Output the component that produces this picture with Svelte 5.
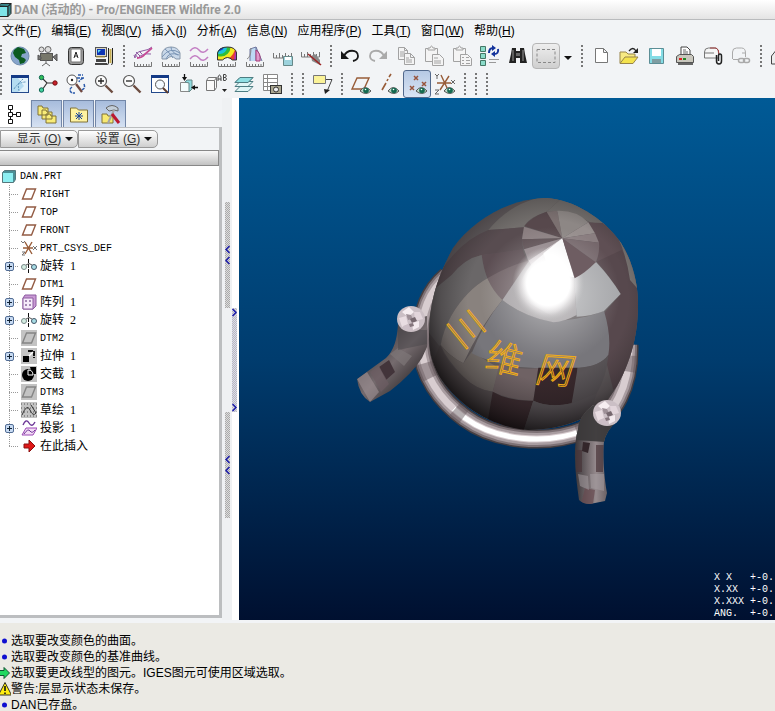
<script lang="ts">
  interface Tool {
    icon: string
    label: string
    state?: 'boxed' | 'active'
  }

  interface TreeItem {
    name: string
    icon: string
    count?: number
    expandable?: boolean
    suppressed?: boolean
  }

  const menus = [
    ['文件', 'F'], ['编辑', 'E'], ['视图', 'V'], ['插入', 'I'], ['分析', 'A'],
    ['信息', 'N'], ['应用程序', 'P'], ['工具', 'T'], ['窗口', 'W'], ['帮助', 'H'],
  ]

  const ruler = '<path d="M3.500 18v4.500h17V18M6.500 20v2M9.500 20v2M12.500 20v2M15.500 20v2M18 20v2" fill="none" stroke="#777" stroke-width="1"/>'
  const eye = '<path d="M11 19q5-7 11 0q-5 5-11 0z" fill="#bcd8c8" stroke="#555"/><circle cx="17" cy="18.500" r="2.800" fill="#146a50"/><circle cx="16.500" cy="17.500" r=".8" fill="#fff"/>'
  const lens = '<circle cx="9" cy="9" r="5.500" fill="#fbfbfb" stroke="#555" stroke-width="1.200"/><path d="M13.500 13.500l7 7" stroke="#6c4c40" stroke-width="2.400"/>'
  const clip = '<path d="M3.500 4.500h12v13h-12z" fill="#f4f4f4" stroke="#a2a2a2"/><path d="M6 6V4h2q1.500-4 3 0h2v2z" fill="#f4f4f4" stroke="#a2a2a2"/><path d="M10.500 10.500h7l4 4v7h-11z" fill="#f4f4f4" stroke="#a2a2a2"/>'

  const icons: Record<string, string> = {
    globe: '<circle cx="12" cy="12" r="9" fill="#86a4cb" stroke="#6f8cae"/><path d="M6 6l4-3 6 2 2 4-4 1-1 3 3 1 2 2-2 3-4 1-1-4-4-3-2-4z" fill="#0b5a20"/>',
    camera: '<circle cx="5.500" cy="5.500" r="2.500" fill="#ddd" stroke="#666"/><circle cx="12" cy="5.500" r="3" fill="#ddd" stroke="#666"/><rect x="4.500" y="9.500" width="12" height="7" fill="#77776a" stroke="#555"/><path d="M17 13l4-3v7zM2 11l3 2v2l-3 1z" fill="#777" stroke="#555"/><path d="M10 16v3l-4 3M10 19l4 3" fill="none" stroke="#666"/>',
    key: '<rect x="4.500" y="3.500" width="15" height="17" rx="3" fill="#999" stroke="#333"/><rect x="7" y="5" width="10" height="13" rx="1" fill="#fff" stroke="#777"/><path d="M10 14l2-6 2 6M10.700 12h2.600" stroke="#222" fill="none"/>',
    computer: '<rect x="3.500" y="3.500" width="11" height="9" fill="#d8d4c4" stroke="#555"/><rect x="5" y="5" width="8" height="6" fill="#0d35b5"/><path d="M6 6h3l-3 3z" fill="#5adcf4"/><path d="M4 15h10v3H4zM3 19h12v2H3z" fill="#444"/><path d="M4 13h9" stroke="#bba040"/><path d="M16.500 4v15l-1 2M20.500 4v15l-1 2" stroke="#222" fill="none"/><path d="M18.500 5v14" stroke="#c5ac50" stroke-width="2"/>',
    curvature: '<path d="M4 14q0-6 7-7t10-4M7 14q4-5 13-4M4 14l-1-3M7 14l-3-4M9 12L5 8M11 10L8 7" stroke="#8e5aa2" fill="none"/><path d="M6 14q5 0 8-4l7-6" stroke="#c64a96" stroke-width="1.800" fill="none"/>' + ruler,
    shell: '<path d="M3 15V9q2-6 9-6t9 6v6h-4q-5-5-9 0z" fill="#c9d8e9" stroke="#8797aa"/><path d="M3 13q8-11 18-4M7 15q3-8 13-4M6 5q6 5 8 9M12 3q0 5 7 8" fill="none" stroke="#7994b5"/>' + ruler,
    waves: '<path d="M3 7q5-6 9-1t9-1M3 15q5-6 9-1t9-1" fill="none" stroke="#c480c4" stroke-width="1.500"/>' + ruler,
    rainbow: '<clipPath id="rb"><path d="M2 16V9q2-6 10-6t10 6v7h-5q-5-5-10 0z"/></clipPath><g clip-path="url(#rb)"><path d="M0 0h24v18H0z" fill="#e8402c"/><circle cx="7" cy="3" r="13" fill="#f4e820"/><circle cx="6" cy="3" r="9.500" fill="#30bd38"/><circle cx="5" cy="3" r="7" fill="#1cc4dc"/><circle cx="4" cy="2" r="5" fill="#1839d0"/><path d="M20 8h4v8h-5z" fill="#b030b8"/></g><path d="M2.500 16V9q2-6 10-6t9 6v7h-4q-5-5-10 0z" fill="none" stroke="#333"/>' + ruler,
    section: '<path d="M7 17V5l6-2 6 14M13 3v14" fill="#bdd9f4" stroke="#6f779e"/><path d="M4 15q4-2 4-11" fill="none" stroke="#888"/><path d="M13 6q5 3 4 11h-4z" fill="#df9bcc" stroke="#aa3a7a"/>' + ruler,
    rulerSave: '<path d="M2.500 9v5h18V9M5.500 11v3M8.500 9v5M11.500 11v3M14.500 9v5M17.500 11v3" fill="none" stroke="#777"/><path d="M12.500 12.500h9v9h-9z" fill="#9cd2dc" stroke="#688"/><path d="M14 13h6v3h-6z" fill="#fff"/>',
    rulerCut: '<path d="M2.500 8v5h18V8M5.500 10v3M8.500 8v5M11.500 10v3M14.500 8v5M17.500 10v3" fill="none" stroke="#777"/><path d="M12 12l4-2 5 6v5l-8-4z" fill="#888"/><path d="M9 10l13 11" stroke="#9c2424" stroke-width="1.500"/>',
    undo: '<path d="M6 12c3-7 14-7 14 0q0 4-5 5" fill="none" stroke="#181818" stroke-width="1.800"/><path d="M3 7v8h8z" fill="#181818"/>',
    redo: '<path d="M18 12c-3-7-14-7-14 0q0 4 5 5" fill="none" stroke="#aaa" stroke-width="1.800"/><path d="M21 7v8h-8z" fill="#aaa"/>',
    copy: '<path d="M4.500 3.500h6l3 3v9h-9zM10.500 3.500v3h3M6 8h5M6 10h5M6 12h5" fill="#f4f4f4" stroke="#a2a2a2"/><path d="M10.500 9.500h6l4 4v7h-10zM16.500 9.500v4h4M12 14h3M12 16h6M12 18h6" fill="#f4f4f4" stroke="#a2a2a2"/>',
    paste: clip + '<path d="M12 14h4M12 17h7M12 19h7" stroke="#a2a2a2"/>',
    pasteSpecial: clip + '<path d="M12 13.500h2M16 13.500h3M12 16.500h2M16 16.500h4M12 19.500h2M16 19.500h4" stroke="#a2a2a2"/>',
    regen: '<path d="M2.500 2.500h5v5h-5zM2.500 9.500h5v5h-5zM2.500 16.500h5v5h-5z" fill="#8adbc9" stroke="#476"/><path d="M11 9q0-5 4-5M20 5q1 5-4 5" fill="none" stroke="#14349c" stroke-width="2"/><path d="M14 1v6l4-3zM17 7v6l-4-3z" fill="#14349c"/><path d="M11 15.500h10M11 18.500h7" stroke="#999"/>',
    find: '<path d="M6 4h4v3h4V4h4l1 6 2 9h-7v-5h-4v5H3l2-9z" fill="#222"/><path d="M7 6v11M17 6v11" stroke="#999"/><path d="M10 9h4v3h-4z" fill="#666"/>',
    select: '<path d="M3 5.500h18v13H3z" fill="none" stroke="#888" stroke-dasharray="3 2"/>',
    fresh: '<path d="M6.500 4.500h8l4 4v10h-12zM14.500 4.500v4h4" fill="#fff" stroke="#777"/>',
    open: '<path d="M3 19V8h6l2 2h7v3" fill="#f7ea83" stroke="#98854a"/><path d="M3 19.500l5-6.500h13l-5 6.500z" fill="#f4e34e" stroke="#98854a"/><path d="M12 7q4-5 7 0" fill="none" stroke="#222" stroke-width="1.300"/><path d="M21 4v5h-5z" fill="#222"/>',
    save: '<path d="M4.500 4.500h14v15h-14z" fill="#84dce5" stroke="#5c8e96"/><path d="M7 5h9v7H7z" fill="#fff"/><path d="M7 15h9v4H7z" fill="#7f9da2"/>',
    print: '<path d="M8 12V3h6l3 3v6z" fill="#fff" stroke="#444"/><path d="M10 6h3M10 8h5M10 10h5" stroke="#666"/><path d="M3.500 12.500l3-2h12l2 2v6h-17z" fill="#c9c7bd" stroke="#555"/><path d="M5 20h15" stroke="#666" stroke-width="2"/><path d="M6 15h3" stroke="#d22" stroke-width="2"/><path d="M10 15h3" stroke="#282" stroke-width="2"/>',
    mail: '<path d="M3.500 14V8q0-4 4-4h6q4 0 4 5v5zM3 9h10" fill="#f6f6f6" stroke="#777"/><path d="M9 4h6q3 1 3 6" stroke="#a23c3c" fill="none"/><path d="M15.500 11v6q0 3 2.500 3t2.500-3v-5q0-2-1.500-2t-1.500 2v5" fill="none" stroke="#222" stroke-width="1.500"/>',
    mailLink: '<path d="M3.500 15V8q0-4 4-4h5q4 0 4 5v4M4 15.500h5M13 9h3" fill="none" stroke="#aaa"/><rect x="9.500" y="14.500" width="6" height="4" rx="2" fill="none" stroke="#aaa" stroke-width="1.500"/><rect x="14.500" y="14.500" width="6" height="4" rx="2" fill="none" stroke="#aaa" stroke-width="1.500"/>',
    partial: '<path d="M3.500 20V12l4-5h9v13zM7 12h8" fill="#eee" stroke="#444"/>',
    sketch: '<rect x="3.500" y="3.500" width="17" height="17" fill="#e2f3fb" stroke="#244a8c"/><path d="M3 3h18v3H3z" fill="#143a86"/><path d="M4 6h6l6 8-6 6H4z" fill="#b4dcf1"/><path d="M6 17q4-7 12-7M15 7l-5 5 1 7" fill="none" stroke="#5c94bc" stroke-dasharray="2 1"/>',
    triad: '<path d="M6 6l5 5h8M11 11l-5 7" stroke="#333" stroke-width="1.200" fill="none"/><circle cx="5.500" cy="5.500" r="2.200" fill="#30be55" stroke="#165"/><circle cx="5.500" cy="18" r="2.200" fill="#40cf9b" stroke="#165"/><circle cx="19" cy="11" r="2.200" fill="#c8202c" stroke="#711"/>',
    reorient: '<circle cx="8" cy="8" r="5" fill="#fff" stroke="#555"/><circle cx="8" cy="8" r="1.200" fill="#222"/><path d="M12 12l6 8" stroke="#704840" stroke-width="2.400"/><path d="M14 3h5M13 6h7q-4 1-5 4M20 12q2 5-3 6M8 15q-4 3 0 6h3" fill="none" stroke="#2858aa" stroke-width="1.500" stroke-dasharray="3 1"/>',
    zoomIn: lens + '<path d="M6 9h6M9 6v6" stroke="#222" stroke-width="1.300"/>',
    zoomOut: lens + '<path d="M6 9h6" stroke="#222" stroke-width="1.300"/>',
    refit: '<rect x="3.500" y="3.500" width="17" height="17" fill="#fff" stroke="#234a8c"/><path d="M3 3h18v3H3z" fill="#143a86"/><circle cx="12" cy="12.500" r="4.500" fill="#f4faff" stroke="#555"/><path d="M15 16l5 5" stroke="#5c3c30" stroke-width="2"/>',
    views: '<path d="M4.500 10.500h9v9h-9z" fill="#f4fcfc" stroke="#888"/><path d="M9 10l2-2h5v9l-3 3V11z" fill="#8fdbe0" stroke="#688"/><path d="M8.500 2v5M22 15.500h-5" stroke="#111" stroke-width="1.300"/><path d="M6 5h5l-2.500 4zM19 13v5l-4-2.500z" fill="#111"/>',
    named: '<path d="M2.500 8.500l2-3h8v10l-2 3h-8zM2.500 8.500h8v10M10.500 8.500l2-3" fill="#fafafa" stroke="#777"/><path d="M14 9V5q1.500-4 3 0v4M14 7h3M19.500 2.500v6h2q2-1.500 0-3h-2M19.500 2.500h2q1.500 1.500 0 3" fill="none" stroke="#444"/><path d="M18 17h5l-2.500 3z" fill="#222"/>',
    layers: '<path d="M3 19.500l5-5h13l-5 5zM3 14.500l5-5h13l-5 5zM3 10.500l5-5h13l-5 5z" fill="#dff6f6" stroke="#4d7d82"/><path d="M3 10.500l5-5h13l-5 5z" fill="#8fe0e4" stroke="#4d7d82"/>',
    table: '<path d="M3.500 2.500h14v16h-14zM3 6.500h15M3 10.500h15M3 14.500h15M7.500 3v15" fill="#fff" stroke="#888"/><rect x="10.500" y="13.500" width="11" height="8" fill="#aaa690" stroke="#333"/><circle cx="16" cy="17.500" r="2.500" fill="#eee" stroke="#333"/>',
    note: '<path d="M3.500 3.500h12v8h-12z" fill="#fbf398" stroke="#777"/><path d="M16 7.500h6l-5 12" fill="none" stroke="#444"/><path d="M14 17l6 1-5 4z" fill="#222"/>',
    planes: '<path d="M3 17L8 6h12L15 17z" fill="none" stroke="#985c38" stroke-width="1.400"/>' + eye,
    axes: '<path d="M5 18l4-7M10 9l1-2M12 5l2-3" stroke="#985c38" stroke-width="1.600"/>' + eye,
    points: '<path d="M9 4l4 4m0-4l-4 4M5 14l4 4m0-4l-4 4M17 10l4 4m0-4l-4 4" stroke="#98543c" stroke-width="1.500"/>' + eye,
    csys: '<path d="M4 11h14M8 3l7 15M16 4L7 18" stroke="#985c38" stroke-width="1.400"/><path d="M2 2l2 2 2-2M4 4v3M18 8l4 4m0-4l-4 4M2 18h4l-4 4h4" fill="none" stroke="#666"/>' + eye,
    tree: '<path d="M5.500 3.500h4v4h-4zM5.500 10.500h4v4h-4zM5.500 17.500h4v4h-4zM13.500 10.500h4v4h-4zM7.500 8v2M7.500 15v2M10 12.500h3" fill="#fff" stroke="#111"/>',
    folders: '<path d="M3 13V4h4l1 2h5v7zM7 17V8h4l1 2h5v7zM11 21v-9h4l1 2h5v7z" fill="#f8ec78" stroke="#807336"/>',
    favorite: '<path d="M3.500 20V6h6l2 2h9v12z" fill="#fff3a0" stroke="#807238"/><path d="M12 10v8M8 14h8M9 11l6 6M15 11l-6 6" stroke="#17439a"/>',
    tools: '<path d="M3 21v-9h5l1 2h5v7z" fill="#f7e972" stroke="#807238"/><path d="M7 6q6-5 12 0v3l-4-1-5 1z" fill="#c3ced9" stroke="#666"/><path d="M15 8L9 21" stroke="#a4a4a4" stroke-width="2"/><path d="M13 12l7 9" stroke="#bb1830" stroke-width="3"/>',
  }

  // tree glyphs sit on a 16px grid
  const treeIcons: Record<string, string> = {
    plane: '<path d="M1.500 13L5.500 3h9l-4 10z" fill="#fff" stroke="#935b43" stroke-width="1.400"/>',
    planeOff: '<path d="M1.500 13L5.500 3h9l-4 10z" fill="none" stroke="#858585" stroke-width="1.400"/>',
    csys: '<path d="M2 8h10M4 2l7 12M11 2L4 14" stroke="#985c38" stroke-width="1.400"/><path d="M0 1l2 2 2-2M12 6l4 4m0-4l-4 4M1 12h3l-3 3h3" fill="none" stroke="#777"/>',
    revolve: '<circle cx="3" cy="9" r="2.500" fill="#d4eee2" stroke="#7a8a8a"/><circle cx="13" cy="9" r="2.500" fill="#a7dde5" stroke="#456"/><path d="M7.500 1v15" stroke="#111" stroke-dasharray="4 1"/><path d="M5 7q3-3 6 0" fill="none" stroke="#555"/>',
    pattern: '<path d="M2 4l2-3h11v11l-3 3H2z" fill="#c99ad4" stroke="#8c5aa0"/><path d="M2 4h10v11H2z" fill="#f5eaf9" stroke="#8c5aa0"/><path d="M4 7h2M8 7h2M4 11h2M8 11h2" stroke="#8b68a0" stroke-width="1.500"/>',
    extrude: '<path d="M2 8h6v6H2z" fill="#000"/><path d="M7 3h6v7" fill="none" stroke="#111" stroke-width="2" stroke-dasharray="5 1"/><path d="M8 8l4-4" stroke="#fff" stroke-width="1.500"/>',
    intersect: '<circle cx="7" cy="9" r="6" fill="#000"/><path d="M9 1h6v7h-4z" fill="#000"/><path d="M7 9V4q5 0 5 5z" fill="none" stroke="#fff"/>',
    sketch: '<path d="M0 2h16M0 6h16M0 10h16M0 14h16" stroke="#555" stroke-dasharray="1 2"/><path d="M1 13q5-12 8-5t6 3M10 3l5 8" fill="none" stroke="#333"/>',
    project: '<path d="M2 5q3-7 6-2t6-1" fill="none" stroke="#6b3596" stroke-width="1.400"/><path d="M1 15l4-7h11l-4 7z" fill="#f4dcf6" stroke="#9a48b5"/><path d="M3 14q4-6 6-3t5-1" fill="none" stroke="#6b3596"/>',
    insert: '<path d="M3 6h5V2l6 6-6 6v-4H3z" fill="#df1818" stroke="#8a1010"/>',
  }

  const standardBar: Tool[][] = [
    [
      { icon: 'globe', label: '浏览器' },
      { icon: 'camera', label: '动画' },
      { icon: 'key', label: '快捷键' },
      { icon: 'computer', label: '工作站' },
    ],
    [
      { icon: 'curvature', label: '曲率' },
      { icon: 'shell', label: '截面分析' },
      { icon: 'waves', label: '偏移' },
      { icon: 'rainbow', label: '着色曲率' },
      { icon: 'section', label: '拔模' },
      { icon: 'rulerSave', label: '已保存分析' },
      { icon: 'rulerCut', label: '隐藏分析' },
    ],
    [
      { icon: 'undo', label: '撤消' },
      { icon: 'redo', label: '重做' },
      { icon: 'copy', label: '复制' },
      { icon: 'paste', label: '粘贴' },
      { icon: 'pasteSpecial', label: '选择性粘贴' },
      { icon: 'regen', label: '再生' },
      { icon: 'find', label: '查找' },
      { icon: 'select', label: '选取框', state: 'boxed' },
    ],
    [
      { icon: 'fresh', label: '新建' },
      { icon: 'open', label: '打开' },
      { icon: 'save', label: '保存' },
      { icon: 'print', label: '打印' },
      { icon: 'mail', label: '发送附件' },
      { icon: 'mailLink', label: '发送链接' },
    ],
    [{ icon: 'partial', label: '关闭' }],
  ]

  const viewBar: Tool[][] = [
    [
      { icon: 'sketch', label: '重画' },
      { icon: 'triad', label: '旋转中心' },
      { icon: 'reorient', label: '定向模式' },
      { icon: 'zoomIn', label: '放大' },
      { icon: 'zoomOut', label: '缩小' },
      { icon: 'refit', label: '重新调整' },
      { icon: 'views', label: '重定向' },
      { icon: 'named', label: '视图列表' },
      { icon: 'layers', label: '层' },
      { icon: 'table', label: '视图管理器' },
    ],
    [],
    [{ icon: 'note', label: '注释' }],
    [
      { icon: 'planes', label: '基准平面' },
      { icon: 'axes', label: '基准轴' },
      { icon: 'points', label: '基准点', state: 'active' },
      { icon: 'csys', label: '坐标系' },
    ],
    [],
    [],
    [],
  ]

  const tabs = [
    { icon: 'tree', label: '模型树' },
    { icon: 'folders', label: '文件夹浏览器' },
    { icon: 'favorite', label: '收藏夹' },
    { icon: 'tools', label: '连接' },
  ]

  const features: TreeItem[] = [
    { name: 'RIGHT', icon: 'plane' },
    { name: 'TOP', icon: 'plane' },
    { name: 'FRONT', icon: 'plane' },
    { name: 'PRT_CSYS_DEF', icon: 'csys' },
    { name: '旋转', count: 1, icon: 'revolve', expandable: true },
    { name: 'DTM1', icon: 'plane' },
    { name: '阵列', count: 1, icon: 'pattern', expandable: true },
    { name: '旋转', count: 2, icon: 'revolve', expandable: true },
    { name: 'DTM2', icon: 'planeOff', suppressed: true },
    { name: '拉伸', count: 1, icon: 'extrude', expandable: true, suppressed: true },
    { name: '交截', count: 1, icon: 'intersect', suppressed: true },
    { name: 'DTM3', icon: 'planeOff', suppressed: true },
    { name: '草绘', count: 1, icon: 'sketch', suppressed: true },
    { name: '投影', count: 1, icon: 'project', expandable: true },
    { name: '在此插入', icon: 'insert' },
  ]

  const messages = [
    { kind: 'info', text: '选取要改变颜色的曲面。' },
    { kind: 'info', text: '选取要改变颜色的基准曲线。' },
    { kind: 'prompt', text: '选取要更改线型的图元。IGES图元可使用区域选取。' },
    { kind: 'warning', text: '警告:层显示状态未保存。' },
    { kind: 'info', text: 'DAN已存盘。' },
  ]

  const tolerances = ['X X   +-0.', 'X.XX  +-0.', 'X.XXX +-0.', 'ANG.  +-0.']

  const ringPath = 'M447 276C426 294 420 320 421 345C423 375 440 400 465 418C495 440 545 446 585 430C615 417 630 385 629 345'

  // dome facets, three units to a scene pixel
  const facets = [
    ['M265 120Q330 40 430 20L485 25L440 65Q380 85 372 112Z', '#726e6c'],
    ['M440 65L485 25Q600 40 655 110L570 97Q510 60 440 65Z', '#74706e'],
    ['M550 97L625 100Q680 150 695 235Q640 190 590 215Q605 150 565 100Z', '#5f4f54'],
    ['M590 215L665 180Q705 250 725 330L710 480Q690 560 640 600L620 520Q635 440 612 370L662 312Q630 260 590 215Z', '#57484d'],
    ['M655 145Q725 230 725 310L690 270Q680 200 655 145Z', '#7a7573'],
    ['M90 300Q160 160 265 120L372 112Q362 150 370 178Q290 190 245 195Q190 210 155 255L110 300Z', '#584c50'],
    ['M245 195L368 178Q375 200 385 215L305 330Q255 280 245 195Z', '#5c4e53'],
    ['M262 265Q330 225 385 212L392 225L305 330Q275 300 262 265Z', '#6e6064'],
    ['M155 255Q195 205 245 195Q250 235 262 265Q200 300 155 375L120 470L80 420L100 300Z', '#6a6768'],
    ['M262 265Q280 305 307 330Q240 410 190 520Q150 500 122 465Q130 420 155 375Q200 300 262 265Z', '#89827e'],
    ['M122 465Q150 500 190 520L215 485Q290 530 298 535L278 605Q230 600 190 560Q140 510 122 465Z', '#756e6a'],
    ['M307 330Q370 380 460 395Q560 385 612 362Q635 440 625 495Q600 530 530 535L415 535Q290 530 215 490Q250 400 307 330Z', '#77767b'],
    ['M307 330L385 215L487 145L522 262L530 375Q490 397 460 397Q370 380 307 330Z', '#a5a1a4'],
    ['M522 262L588 216Q630 260 662 312L612 363Q570 380 530 380Z', '#a8a9ac'],
    ['M298 522Q350 540 415 535L400 632Q330 630 278 605Z', '#6f6264'],
    ['M415 533L533 533Q530 600 515 640Q450 655 400 632Z', '#37272b'],
    ['M533 533Q600 530 625 495Q620 560 590 610Q550 640 515 640Z', '#585356'],
    ['M120 465Q140 520 190 560Q230 600 278 605L262 700Q170 660 90 540Z', '#5a5354'],
    ['M278 605Q330 635 400 632L370 725L262 700Z', '#3d2c30'],
    ['M400 632Q450 655 515 640L590 610L560 700L370 725Z', '#5a5558'],
  ]

  // slices of the disc around the pole
  const slices = [
    ['M487 145L373 108Q395 80 440 65Z', '#57484c'],
    ['M487 145L440 65L472 62Z', '#7b7070'],
    ['M487 145L472 62Q530 60 565 97Z', '#8d8785'],
    ['M487 145L565 97L585 130Z', '#978f8e'],
    ['M487 145L585 130L597 158Z', '#8a7e80'],
    ['M487 145L597 158Q600 190 587 217Z', '#75676b'],
    ['M487 145L372 110L366 148Z', '#8a7e80'],
    ['M487 145L366 148L372 178Z', '#5c4e52'],
    ['M487 145L372 178L385 212Z', '#918589'],
    ['M487 145L385 212L400 232Z', '#cfc6ca'],
  ]

  const capFacets = [
    ['-9,-7 -2,-12 3,-7 -3,-2', '#f6eef1'],
    ['3,-7 9,-7 12,0 4,2', '#e2d5db'],
    ['-12,-1 -5,-3 -3,5 -9,8', '#e9dde2'],
    ['-5,-5 0,-4 2,0 -3,1', '#9e9097'],
    ['-1,0 4,-2 6,2 1,4', '#76686f'],
    ['1,4 8,2 8,8 2,11', '#f3eaee'],
    ['-8,7 -2,5 1,11 -5,11', '#cdbfc7'],
    ['-2,5 2,4 3,7 -1,8', '#85767d'],
  ]
</script>

{#snippet icon(name: string)}
  <svg width="24" height="24" viewBox="0 0 24 24" aria-hidden="true">{@html icons[name]}</svg>
{/snippet}

{#snippet chevron(dir: 'left' | 'right')}
  <svg width="5" height="9" viewBox="0 0 5 9" aria-hidden="true">
    <path d={dir === 'left' ? 'M4.500 1L1 4.500 4.500 8' : 'M.5 1L4 4.500.5 8'} fill="none" stroke="#1818a8" stroke-width="1.500" />
  </svg>
{/snippet}

{#snippet toolbar(groups: Tool[][], name: string)}
  <div class="toolbar" role="toolbar" aria-label={name}>
    {#each groups as group}
      <div class="grip"></div>
      {#each group as tool}
        <button class="tool {tool.state ?? ''}" aria-label={tool.label}>{@render icon(tool.icon)}</button>
        {#if tool.icon === 'select'}
          <button class="tool-menu" aria-label="选取选项"><span class="caret"></span></button>
        {/if}
      {/each}
    {/each}
  </div>
{/snippet}

<div class="app">
  <header class="title">
    <svg width="12" height="14" viewBox="0 0 12 14" aria-hidden="true">
      <path d="M-4 3.500h12v10H-4z" fill="#7ee4e8" stroke="#222" />
      <path d="M8 3.500l3-3v10l-3 3zM-2 3l3-2.500h10L8 3.500z" fill="#38888c" stroke="#222" />
    </svg>
    <span>DAN (活动的) - Pro/ENGINEER Wildfire 2.0</span>
  </header>

  <nav class="menubar">
    {#each menus as [name, key]}
      <button>{name}(<u>{key}</u>)</button>
    {/each}
  </nav>

  {@render toolbar(standardBar, '标准')}
  {@render toolbar(viewBar, '视图')}

  <main>
    <aside class="side">
      <div class="tabs">
        {#each tabs as tab, i}
          <button class="tab" class:current={i === 0} aria-label={tab.label}>{@render icon(tab.icon)}</button>
        {/each}
      </div>
      <div class="panel">
        <div class="panel-menus">
          <button>显示 (<u>O</u>)<span class="caret"></span></button>
          <button>设置 (<u>G</u>)<span class="caret"></span></button>
        </div>
        <div class="column-head"></div>
        <div class="tree">
          <div class="row root">
            <svg width="14" height="14" viewBox="0 0 14 14" aria-hidden="true">
              <path d="M.5 3.500l2-2h11v9l-2 3H.5z" fill="#4b8f96" stroke="#55777c" />
              <path d="M1 4h10v9H1z" fill="#8deff2" />
            </svg>
            <span class="latin">DAN.PRT</span>
          </div>
          <ul>
            {#each features as item}
              <li class="row">
                <span class="branch">
                  {#if item.expandable}<button class="expander" aria-label="展开 {item.name}"></button>{/if}
                </span>
                <svg class:suppressed={item.suppressed} width="16" height="16" viewBox="0 0 16 16" aria-hidden="true">
                  {@html treeIcons[item.icon]}
                </svg>
                <span class:latin={/^[A-Z]/.test(item.name)}>{item.name}</span>
                {#if item.count}<span class="count">{item.count}</span>{/if}
              </li>
            {/each}
          </ul>
        </div>
      </div>
    </aside>

    <div class="sashes">
      <div class="sash inner">{@render chevron('left')}{@render chevron('left')}</div>
      <div class="sash outer">{@render chevron('right')}{@render chevron('right')}</div>
      <div class="sash inner">{@render chevron('left')}{@render chevron('left')}</div>
    </div>

    <section class="viewport">
      <svg class="scene" viewBox="239 98 536 522" preserveAspectRatio="xMinYMin meet" role="img" aria-label="DAN">
        <defs>
          <radialGradient id="glow">
            <stop offset="0" stop-color="#fff" />
            <stop offset=".6" stop-color="#fff" />
            <stop offset=".8" stop-color="#f4f2f3" stop-opacity=".5" />
            <stop offset="1" stop-color="#ccc" stop-opacity="0" />
          </radialGradient>
          <radialGradient id="haze">
            <stop offset="0" stop-color="#fff" stop-opacity=".5" />
            <stop offset="1" stop-color="#ddd" stop-opacity="0" />
          </radialGradient>
          <radialGradient id="shade" gradientUnits="userSpaceOnUse" cx="548" cy="300" r="134">
            <stop offset="0" stop-color="#333" stop-opacity="0" />
            <stop offset=".6" stop-color="#222" stop-opacity="0" />
            <stop offset=".8" stop-color="#181416" stop-opacity=".3" />
            <stop offset="1" stop-color="#080607" stop-opacity=".8" />
          </radialGradient>
          <linearGradient id="legRight" x1="0" x2="1">
            <stop offset="0" stop-color="#2d292c" />
            <stop offset=".5" stop-color="#958a8d" />
            <stop offset="1" stop-color="#383235" />
          </linearGradient>
          <linearGradient id="legLeft" x1=".2" y1=".3" x2=".7" y2=".9">
            <stop offset="0" stop-color="#383235" />
            <stop offset=".5" stop-color="#756b6e" />
            <stop offset="1" stop-color="#2e292b" />
          </linearGradient>
          <clipPath id="dome">
            <path d="M546 198C572 199 604 218 621 243C634 264 638 286 638 305C638 330 633 360 614 391C598 416 565 430 528 430C489 427 456 403 439 376C431 361 429 350 429 334C429 304 437 277 453 248C473 220 508 199 546 198Z" />
          </clipPath>
          <clipPath id="rightLeg">
            <path d="M593 405Q578 417 578 429C572 451 576 478 579 500Q583 504 590 504L605 501L607 493C603 470 603 450 604 442Q606 431 617 421Z" />
          </clipPath>
          <clipPath id="leftLeg">
            <path d="M398 323Q397 348 386 358L357 379Q359 395 370 402L390 391Q412 374 422 358L427 347V316Z" />
          </clipPath>
        </defs>

        <g fill="none">
          <path d={ringPath} stroke="#453e41" stroke-width="19" />
          <path d={ringPath} stroke="#7d7175" stroke-width="16" />
          <path d={ringPath} stroke="#a99da1" stroke-width="12" />
          <path d={ringPath} stroke="#d8cdd0" stroke-width="7" />
          <path d={ringPath} stroke="#fff" stroke-width="5" stroke-dasharray="0 150 140 500" />
          <path d={ringPath} stroke="#5f5256" stroke-width="16" stroke-opacity=".45" stroke-dasharray="0 95 16 40 12 98 0 20 14 70 16 100" />
        </g>

        <g clip-path="url(#dome)">
          <g transform="translate(400 190) scale(.33333)">
            <path d="M60 0h700v740H60z" fill="#5f595b" />
            {#each [...facets, ...slices] as [d, fill]}
              <path {d} {fill} />
            {/each}
          </g>
          <rect x="425" y="195" width="216" height="240" fill="url(#shade)" />
          <ellipse cx="550" cy="295" rx="70" ry="68" fill="url(#haze)" />
          <g transform="translate(400 190) scale(.33333)">
            <path d="M487 145L395 222Q340 290 370 330L460 380L530 310L522 262Z" fill="url(#glow)" />
            <ellipse cx="445" cy="280" rx="108" ry="110" fill="url(#glow)" />
            <path d="M487 145L430 190L450 250L522 262Z" fill="#fff" opacity=".9" />
            <path d="M487 145L587 217Q555 250 524 265Z" fill="#6e5d62" />
          </g>
        </g>

        <g class="engraving">
          <text x="469" y="327" transform="rotate(51 469 327)">三</text>
          <text x="505" y="356" transform="rotate(14 505 356)">维</text>
          <text class="slanted" x="553" y="367" transform="rotate(4 553 367)">网</text>
        </g>

        <g clip-path="url(#leftLeg)">
          <rect x="355" y="310" width="75" height="95" fill="url(#legLeft)" />
          <path d="M379 367l10-7 6 12-9 8z" fill="#42343a" />
          <path d="M390 354l8-6 14 8-8 10z" fill="#7d7678" opacity=".7" />
          <path d="M357 379l10-7 12 20-9 10z" fill="#a09296" opacity=".6" />
          <path d="M370 372l9-6 10 18-8 8z" fill="#6c5d62" opacity=".7" />
          <path d="M398 330h29v14l-29 6z" fill="#48454a" opacity=".5" />
        </g>
        <g clip-path="url(#rightLeg)">
          <rect x="572" y="400" width="48" height="106" fill="url(#legRight)" />
          <path d="M570 400h50v24l-15 18-29-2z" fill="#3b3839" opacity=".92" />
          <path d="M583 442l7 1-2 10-6-2z" fill="#33262a" />
          <path d="M576 450h6v22h-6zM596 445h8l-1 27h-7z" fill="#493439" opacity=".7" />
          <path d="M585 488l10 2-2 14h-12z" fill="#66484f" opacity=".7" />
          <path d="M578 474l10 2 1 14-9-4zM590 474h14v17l-13-3z" fill="#a8a0a4" opacity=".5" />
        </g>
        {#each [[411, 319], [607, 413]] as [cx, cy]}
          <g transform="translate({cx} {cy})">
            <ellipse rx="14" ry="13" fill="#cbbfc5" />
            {#each capFacets as [points, fill]}
              <polygon {points} {fill} />
            {/each}
          </g>
        {/each}
      </svg>
      <pre class="tolerances">{tolerances.join('\n')}</pre>
    </section>
  </main>

  <ul class="messages">
    {#each messages as msg}
      <li>
        <svg width="11" height="16" viewBox="0 0 11 16" aria-hidden="true">
          {#if msg.kind === 'info'}
            <circle cx="4.500" cy="8" r="2.500" fill="#1010d0" />
          {:else if msg.kind === 'prompt'}
            <path d="M-2 5.500h6v-3L9.500 8 4 13.500v-3h-6z" fill="#20d860" stroke="#153" />
          {:else}
            <path d="M5 1.500L11.500 14h-13z" fill="#ffee10" stroke="#332" />
            <path d="M5 5v5M5 11.500v1.500" stroke="#111" stroke-width="1.600" />
          {/if}
        </svg>
        {msg.text}
      </li>
    {/each}
  </ul>
</div>

<style>
  :global(body) {
    margin: 0;
  }

  .app {
    display: flex;
    flex-direction: column;
    height: 100vh;
    overflow: hidden;
    background: #f2f4f6;
    color: #000;
    font: 12px/16px "Liberation Sans", "Noto Sans CJK SC", sans-serif;
  }

  button {
    padding: 0;
    border: 0;
    background: none;
    color: inherit;
    font: inherit;
    white-space: nowrap;
  }

  svg {
    display: block;
    flex: none;
  }

  ul {
    margin: 0;
    padding: 0;
    list-style: none;
  }

  .title {
    display: flex;
    align-items: center;
    gap: 2px;
    flex: none;
    height: 19px;
    border-bottom: 1px solid #b9bbbd;
    background: linear-gradient(#fff, #e4e4e4);
    color: #999;
    font: bold 12px/18px Roboto, "Noto Sans CJK SC", sans-serif;
    white-space: nowrap;
  }

  .menubar {
    display: flex;
    flex: none;
    gap: 10px;
    height: 22px;
    padding-left: 2px;
  }

  .toolbar {
    display: flex;
    flex: none;
    align-items: center;
    height: 28px;
    overflow: hidden;
  }

  .grip {
    flex: none;
    width: 11px;
    height: 22px;
    background: repeating-linear-gradient(#777 0 2px, transparent 2px 4px) center / 2px 100% no-repeat;
  }
  .grip:first-child {
    width: 6px;
    background-position: left;
  }

  .tool {
    display: flex;
    flex: none;
    align-items: center;
    justify-content: center;
    box-sizing: border-box;
    width: 28px;
    height: 28px;
  }
  .tool.boxed {
    height: 26px;
    border: 1px solid #b5b5b5;
    border-radius: 4px;
    background: linear-gradient(#eee, #cfcfcf);
  }
  .tool.active {
    border: 1px solid #52698c;
    border-radius: 3px;
    background: linear-gradient(#b6c9e4, #dae5f4);
  }

  .tool-menu {
    flex: none;
    width: 16px;
  }

  .caret {
    display: inline-block;
    border: 4px solid transparent;
    border-top-color: #111;
    border-bottom-width: 0;
  }

  main {
    display: flex;
    flex: 1;
    min-height: 0;
    padding-bottom: 3px;
  }

  .side {
    display: flex;
    flex: none;
    flex-direction: column;
    width: 222px;
  }

  .tabs {
    display: flex;
    flex: none;
    gap: 1px;
    height: 29px;
    padding-top: 2px;
    box-sizing: border-box;
  }

  .tab {
    display: flex;
    align-items: center;
    justify-content: center;
    box-sizing: border-box;
    width: 31px;
    border: 1px solid #7387a8;
    border-bottom: 0;
    background: linear-gradient(#a7bcdc, #d5e1f2);
  }
  .tab.current {
    width: 30px;
    border-color: #fff;
    background: #fff;
  }

  .panel {
    display: flex;
    flex: 1;
    flex-direction: column;
    min-height: 0;
    margin-bottom: 2px;
    border: solid #bcbec0;
    border-width: 1px 3px 3px 0;
  }

  .panel-menus {
    display: flex;
    flex: none;
    padding: 2px 0;
  }
  .panel-menus button {
    box-sizing: border-box;
    width: 80px;
    height: 18px;
    padding-left: 12px;
    border: 1px solid #999;
    border-radius: 0 5px 5px 0;
    background: linear-gradient(#fff, #cfcfcf);
    color: #333;
    line-height: 16px;
  }
  .panel-menus button:first-child {
    width: 78px;
  }
  .panel-menus .caret {
    margin: 0 0 2px 4px;
  }

  .column-head {
    flex: none;
    height: 14px;
    border: 1px solid #888;
    border-left: 0;
    background: linear-gradient(#f8f8f8, #c2c2c2);
  }

  .tree {
    flex: 1;
    min-height: 0;
    padding-top: 1px;
    overflow: hidden;
    background: #fff;
  }

  .row {
    display: flex;
    align-items: center;
    height: 18px;
    gap: 3px;
    white-space: nowrap;
  }
  .root {
    gap: 4px;
    padding-left: 2px;
  }

  .latin {
    font: 10px/16px "Liberation Mono", monospace;
  }
  .row .latin {
    padding-top: 2px;
  }

  .count {
    margin-left: 3px;
    font-family: "Liberation Serif", serif;
  }

  .branch {
    position: relative;
    width: 18px;
    height: 18px;
    background:
      repeating-linear-gradient(90deg, #999 0 1px, transparent 1px 2px) 9px 9px / 9px 1px no-repeat,
      repeating-linear-gradient(#999 0 1px, transparent 1px 2px) 9px 0 / 1px 18px no-repeat;
  }
  .row:last-child .branch {
    background-size: 9px 1px, 1px 9px;
  }

  .row svg.suppressed {
    background: #c3c3c3;
  }

  .expander {
    position: absolute;
    top: 5px;
    left: 5px;
    width: 9px;
    height: 9px;
    border: 1px solid #526d94;
    border-radius: 2px;
    background:
      linear-gradient(#123, #123) center / 5px 1px no-repeat,
      linear-gradient(#123, #123) center / 1px 5px no-repeat,
      #c7daf2;
  }

  .sashes {
    display: flex;
    flex: none;
    flex-direction: column;
    width: 17px;
    padding-top: 104px;
    box-sizing: border-box;
    background: linear-gradient(90deg, #eff1f3 10px, #fff 10px);
  }

  .sash {
    display: flex;
    flex-direction: column;
    align-items: center;
    justify-content: center;
    gap: 2px;
    width: 5px;
    height: 106px;
    margin-left: 3px;
    background: repeating-conic-gradient(#aaa 0 25%, #ddd 0 50%) 0 0 / 2px 2px;
  }
  .sash.outer {
    justify-content: space-between;
    height: 104px;
    margin-left: 10px;
    background: repeating-conic-gradient(#bbb 0 25%, #d9d9ee 0 50%) 0 0 / 2px 2px;
  }

  .viewport {
    position: relative;
    flex: 1;
    min-width: 0;
    overflow: hidden;
    background: linear-gradient(#005a96, #003c6e 50%, #001030);
  }

  .scene {
    width: 100%;
    height: 100%;
  }

  .engraving text {
    fill: none;
    stroke: #f0ac18;
    stroke-width: 1px;
    font: 36px "Noto Sans CJK SC", sans-serif;
    font-weight: 300;
    text-anchor: middle;
    dominant-baseline: central;
  }
  .engraving .slanted {
    font-style: italic;
  }

  .tolerances {
    position: absolute;
    right: 1px;
    bottom: 0;
    margin: 0;
    color: #fff;
    font: 10px/12px "Liberation Mono", monospace;
  }

  .messages {
    flex: none;
    box-sizing: border-box;
    height: 88px;
    padding-top: 10px;
    background: #ebeae4;
  }
  .messages li {
    display: flex;
    height: 16px;
    white-space: nowrap;
  }
</style>
